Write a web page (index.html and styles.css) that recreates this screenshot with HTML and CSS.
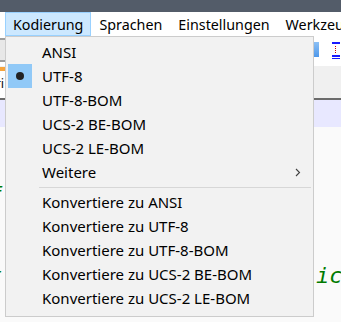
FILE: index.html
```html
<!DOCTYPE html>
<html lang="de">
<head>
<meta charset="utf-8">
<link rel="stylesheet" href="styles.css">
</head>
<body>
<div class="app">
  <div class="titlebar"></div>
  <nav class="menubar">
    <span class="mitem active">Kodierung</span>
    <span class="mitem">Sprachen</span>
    <span class="mitem">Einstellungen</span>
    <span class="mitem">Werkzeuge</span>
  </nav>
  <div class="toolbar">
    <div class="tb-left"><span class="tb-save"></span></div>
    <div class="tb-right">
      <span class="tb-blue"></span>
      <svg class="tb-icon" width="12" height="20" viewBox="0 0 12 20">
        <rect x="0" y="1" width="8" height="2" fill="#1a1aff"/>
        <rect x="9" y="1" width="3" height="2" fill="#1a1aff"/>
        <rect x="10" y="4" width="2" height="9" fill="#1a1aff"/>
        <rect x="3" y="5" width="1" height="1" fill="#c00"/>
        <rect x="3" y="7" width="1" height="1" fill="#c00"/>
        <rect x="3" y="9" width="1" height="1" fill="#c00"/>
        <rect x="3" y="11" width="1" height="1" fill="#c00"/>
        <rect x="0" y="14" width="8" height="2" fill="#1a1aff"/>
        <rect x="9" y="14" width="3" height="2" fill="#1a1aff"/>
        <rect x="0" y="17" width="8" height="1" fill="#1a1aff"/>
        <rect x="10" y="18" width="2" height="1" fill="#1a1aff"/>
      </svg>
    </div>
  </div>
  <div class="tabbar">
    <div class="tab">scri</div>
  </div>
  <div class="editor">
    <div class="line current"></div>
    <div class="line"></div>
    <div class="line"></div>
    <div class="line code"><span class="lpart">f</span></div>
    <div class="line"></div>
    <div class="line"></div>
    <div class="line code"><span class="lpart">t</span><span class="rpart">icht</span></div>
  </div>

  <div class="dropdown">
    <div class="row"><span class="chk"></span><span class="label">ANSI</span></div>
    <div class="row"><span class="chk on"><span class="dot"></span></span><span class="label">UTF-8</span></div>
    <div class="row"><span class="chk"></span><span class="label">UTF-8-BOM</span></div>
    <div class="row"><span class="chk"></span><span class="label">UCS-2 BE-BOM</span></div>
    <div class="row"><span class="chk"></span><span class="label">UCS-2 LE-BOM</span></div>
    <div class="row"><span class="chk"></span><span class="label">Weitere</span>
      <svg class="arrow" width="6" height="9" viewBox="0 0 6 9"><path d="M1 1 L4.5 4.5 L1 8" fill="none" stroke="#404040" stroke-width="1.1"/></svg>
    </div>
    <div class="sep"></div>
    <div class="row"><span class="chk"></span><span class="label">Konvertiere zu ANSI</span></div>
    <div class="row"><span class="chk"></span><span class="label">Konvertiere zu UTF-8</span></div>
    <div class="row"><span class="chk"></span><span class="label">Konvertiere zu UTF-8-BOM</span></div>
    <div class="row"><span class="chk"></span><span class="label">Konvertiere zu UCS-2 BE-BOM</span></div>
    <div class="row"><span class="chk"></span><span class="label">Konvertiere zu UCS-2 LE-BOM</span></div>
  </div>
</div>
</body>
</html>
```

FILE: styles.css
```css
html, body {
  margin: 0;
  padding: 0;
}
body {
  width: 341px;
  height: 322px;
  overflow: hidden;
  background: #fafafa;
  font-family: "Noto Sans", "Open Sans", sans-serif;
}
.app {
  position: relative;
  width: 341px;
  height: 322px;
  display: flex;
  flex-direction: column;
  overflow: hidden;
}
.titlebar {
  height: 12px;
  background: #535c69;
  flex: none;
}
.menubar {
  height: 24px;
  background: #ffffff;
  display: flex;
  align-items: stretch;
  padding-left: 5px;
  flex: none;
  white-space: nowrap;
  font-size: 14.3px;
  color: #000;
}
.mitem {
  display: flex;
  align-items: center;
  padding: 0 7px;
  border: 1px solid transparent;
}
.mitem.active {
  background: #cce8ff;
  border-color: #99d1ff;
}
.toolbar {
  height: 30px;
  background: #ffffff;
  display: flex;
  justify-content: space-between;
  flex: none;
}
.tb-left {
  padding-top: 2px;
}
.tb-save {
  display: block;
  width: 6px;
  height: 20px;
  margin-left: -1px;
  border: 2px solid #9c9c9c;
  border-left: none;
  background: #e8e8e8;
}
.tb-right {
  display: flex;
  align-items: flex-start;
  gap: 13px;
  padding-top: 6px;
}
.tb-blue {
  display: block;
  width: 5px;
  height: 15px;
  background: linear-gradient(#8cc0f5, #4f98ea);
}
.tb-icon {
  display: block;
  margin-top: -1px;
  margin-right: -3px;
}
.tabbar {
  height: 32px;
  background: #f0f0f0;
  flex: none;
  display: flex;
  border-bottom: 2px solid #6b6b6b;
}
.tab {
  margin-left: -40px;
  margin-top: 1px;
  width: 60px;
  background: #ffffff;
  border-top: 4px solid #f7a43c;
  font-size: 13px;
  color: #111;
  padding: 3px 0 0 23px;
  box-sizing: border-box;
  white-space: nowrap;
}
.editor {
  flex: 1;
  background: #fafafa;
  font-family: "DejaVu Sans Mono", "Liberation Mono", monospace;
  font-style: italic;
  color: #007a00;
  font-size: 22px;
}
.line {
  height: 27px;
  line-height: 27px;
  white-space: pre;
}
.line.current {
  background: #e8e8ff;
}
.line.code {
  display: flex;
}
.lpart {
  margin-left: -11px;
}
.rpart {
  margin-left: auto;
  margin-right: -28px;
}
.dropdown {
  position: absolute;
  left: 5px;
  top: 36px;
  width: 307px;
  height: 276px;
  background: #f2f2f2;
  border: 1px solid #cccccc;
  padding-top: 3px;
  box-sizing: content-box;
  font-family: "Noto Sans", "Open Sans", sans-serif;
  font-size: 15px;
  color: #000;
}
.row {
  height: 24px;
  display: flex;
  align-items: center;
  padding-left: 2px;
  position: relative;
}
.chk {
  width: 24px;
  height: 24px;
  flex: none;
  display: flex;
  align-items: center;
  justify-content: center;
}
.chk.on {
  background: #91c9f7;
}
.dot {
  width: 8px;
  height: 8px;
  border-radius: 50%;
  background: #222;
}
.label {
  margin-left: 10px;
  white-space: nowrap;
}
.arrow {
  position: absolute;
  right: 12px;
  top: 8px;
}
.sep {
  height: 1px;
  background: #d7d7d7;
  margin: 3px 2px 2px 33px;
}
```
